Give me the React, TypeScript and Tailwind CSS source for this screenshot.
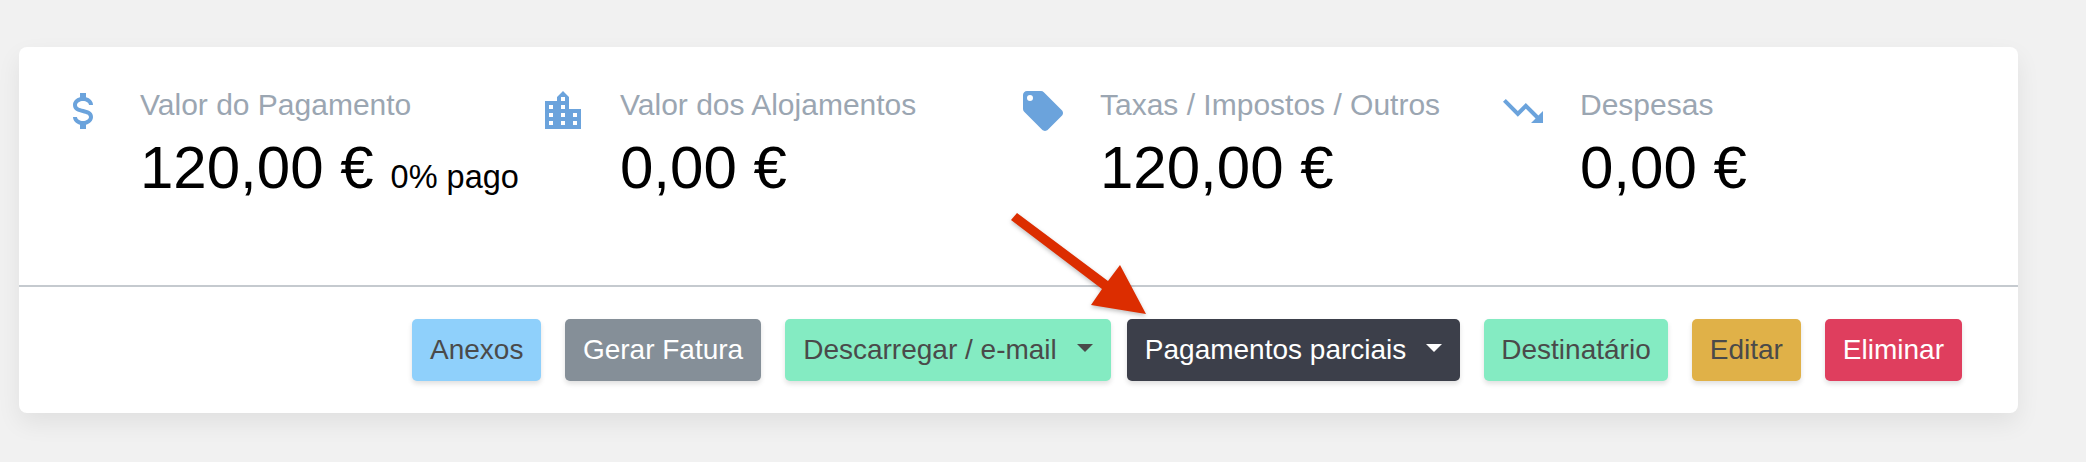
const blue = '#6ba3dc'

function MdiIcon({ d }: { d: string }) {
  return (
    <svg viewBox="0 0 24 24" className="mt-[4px] h-12 w-12 shrink-0" fill={blue}>
      <path d={d} />
    </svg>
  )
}

const ICONS = {
  dollar:
    'M7,15H9C9,16.08 10.37,17 12,17C13.63,17 15,16.08 15,15C15,13.9 13.96,13.5 11.76,12.97C9.64,12.44 7,11.78 7,9C7,7.21 8.47,5.69 10.5,5.18V3H13.5V5.18C15.53,5.69 17,7.21 17,9H15C15,7.92 13.63,7 12,7C10.37,7 9,7.92 9,9C9,10.1 10.04,10.5 12.24,11.03C14.36,11.56 17,12.22 17,15C17,16.79 15.53,18.31 13.5,18.82V21H10.5V18.82C8.47,18.31 7,16.79 7,15Z',
  city: 'M19,15H17V13H19M19,19H17V17H19M13,7H11V5H13M13,11H11V9H13M13,15H11V13H13M13,19H11V17H13M7,11H5V9H7M7,15H5V13H7M7,19H5V17H7M15,11V5L12,2L9,5V7H3V21H21V11H15Z',
  tag: 'M5.5,7A1.5,1.5 0 0,1 4,5.5A1.5,1.5 0 0,1 5.5,4A1.5,1.5 0 0,1 7,5.5A1.5,1.5 0 0,1 5.5,7M21.41,11.58L12.41,2.58C12.05,2.22 11.55,2 11,2H4C2.89,2 2,2.89 2,4V11C2,11.55 2.22,12.05 2.59,12.41L11.58,21.41C11.95,21.77 12.45,22 13,22C13.55,22 14.05,21.77 14.41,21.41L21.41,14.41C21.78,14.05 22,13.55 22,13C22,12.44 21.77,11.94 21.41,11.58Z',
  trending: 'M16,18L18.29,15.71L13.41,10.83L9.41,14.83L2,7.41L3.41,6L9.41,12L13.41,8L19.71,14.29L22,12V18H16Z',
}

function Stat({ icon, label, value, note }: { icon: string; label: string; value: string; note?: string }) {
  return (
    <div className="flex gap-[33px]">
      <MdiIcon d={icon} />
      <div className="whitespace-nowrap">
        <p className="text-[30px] leading-[44px] text-[#9ba6b2]">{label}</p>
        <p className="mt-[5px] text-[60px] leading-[72px] text-black">
          {value}
          {note && <span className="ml-[17px] text-[32.5px]">{note}</span>}
        </p>
      </div>
    </div>
  )
}

function Caret({ white }: { white?: boolean }) {
  return (
    <span
      className={`-mt-[4px] ml-[20px] h-0 w-0 border-x-[8px] border-t-[8px] border-x-transparent ${
        white ? 'border-t-white' : 'border-t-[#4a4a4a]'
      }`}
    />
  )
}

function Btn({ className, children }: { className: string; children: React.ReactNode }) {
  return (
    <button
      type="button"
      className={`flex h-[62px] items-center rounded-[5px] text-[28px] shadow-[0_3px_5px_rgba(0,0,0,0.12)] ${className}`}
    >
      {children}
    </button>
  )
}

export default function App() {
  return (
    <div className="h-[462px] bg-[#f1f1f1] pl-[19px] pt-[47px] font-['Liberation_Sans',Arial,sans-serif]">
      <div className="w-[1999px] rounded-[8px] bg-white shadow-[0_10px_24px_rgba(0,0,0,0.07)]">
        <div className="grid h-[238px] grid-cols-[480px_480px_480px_1fr] pl-[40px] pt-[36px]">
          <Stat icon={ICONS.dollar} label="Valor do Pagamento" value="120,00 €" note="0% pago" />
          <Stat icon={ICONS.city} label="Valor dos Alojamentos" value="0,00 €" />
          <Stat icon={ICONS.tag} label="Taxas / Impostos / Outros" value="120,00 €" />
          <Stat icon={ICONS.trending} label="Despesas" value="0,00 €" />
        </div>
        <div className="relative flex h-[128px] justify-end gap-[24px] border-t-2 border-[#c5cacf] pr-[56px] pt-[32px]">
          <Btn className="bg-[#8fd0fb] px-[17.5px] text-[#4a4a4a]">Anexos</Btn>
          <Btn className="bg-[#858f98] px-[18px] text-white">Gerar Fatura</Btn>
          <Btn className="bg-[#84ebc2] px-[18px] text-[#4a4a4a]">
            Descarregar / e-mail
            <Caret />
          </Btn>
          <Btn className="-ml-[8px] bg-[#3c3f4a] px-[18px] text-white">
            Pagamentos parciais
            <Caret white />
          </Btn>
          <Btn className="bg-[#84ebc2] px-[17px] text-[#4a4a4a]">Destinatário</Btn>
          <Btn className="bg-[#e0b148] px-[18px] text-[#4a4a4a]">Editar</Btn>
          <Btn className="bg-[#df3e5e] px-[18px] text-white">Eliminar</Btn>
          {/* red annotation arrow sits over the divider */}
          <svg
            className="absolute left-[990px] top-[-80px] overflow-visible"
            width="140"
            height="110"
            viewBox="0 0 140 110"
          >
            <path
              d="M8 6 L99 74 L111 58 L137 107 L82 98 L93 82 L2 13 Z"
              fill="#dc2d00"
              style={{ filter: 'drop-shadow(0 2px 2px rgba(0,0,0,0.25))' }}
            />
          </svg>
        </div>
      </div>
    </div>
  )
}
